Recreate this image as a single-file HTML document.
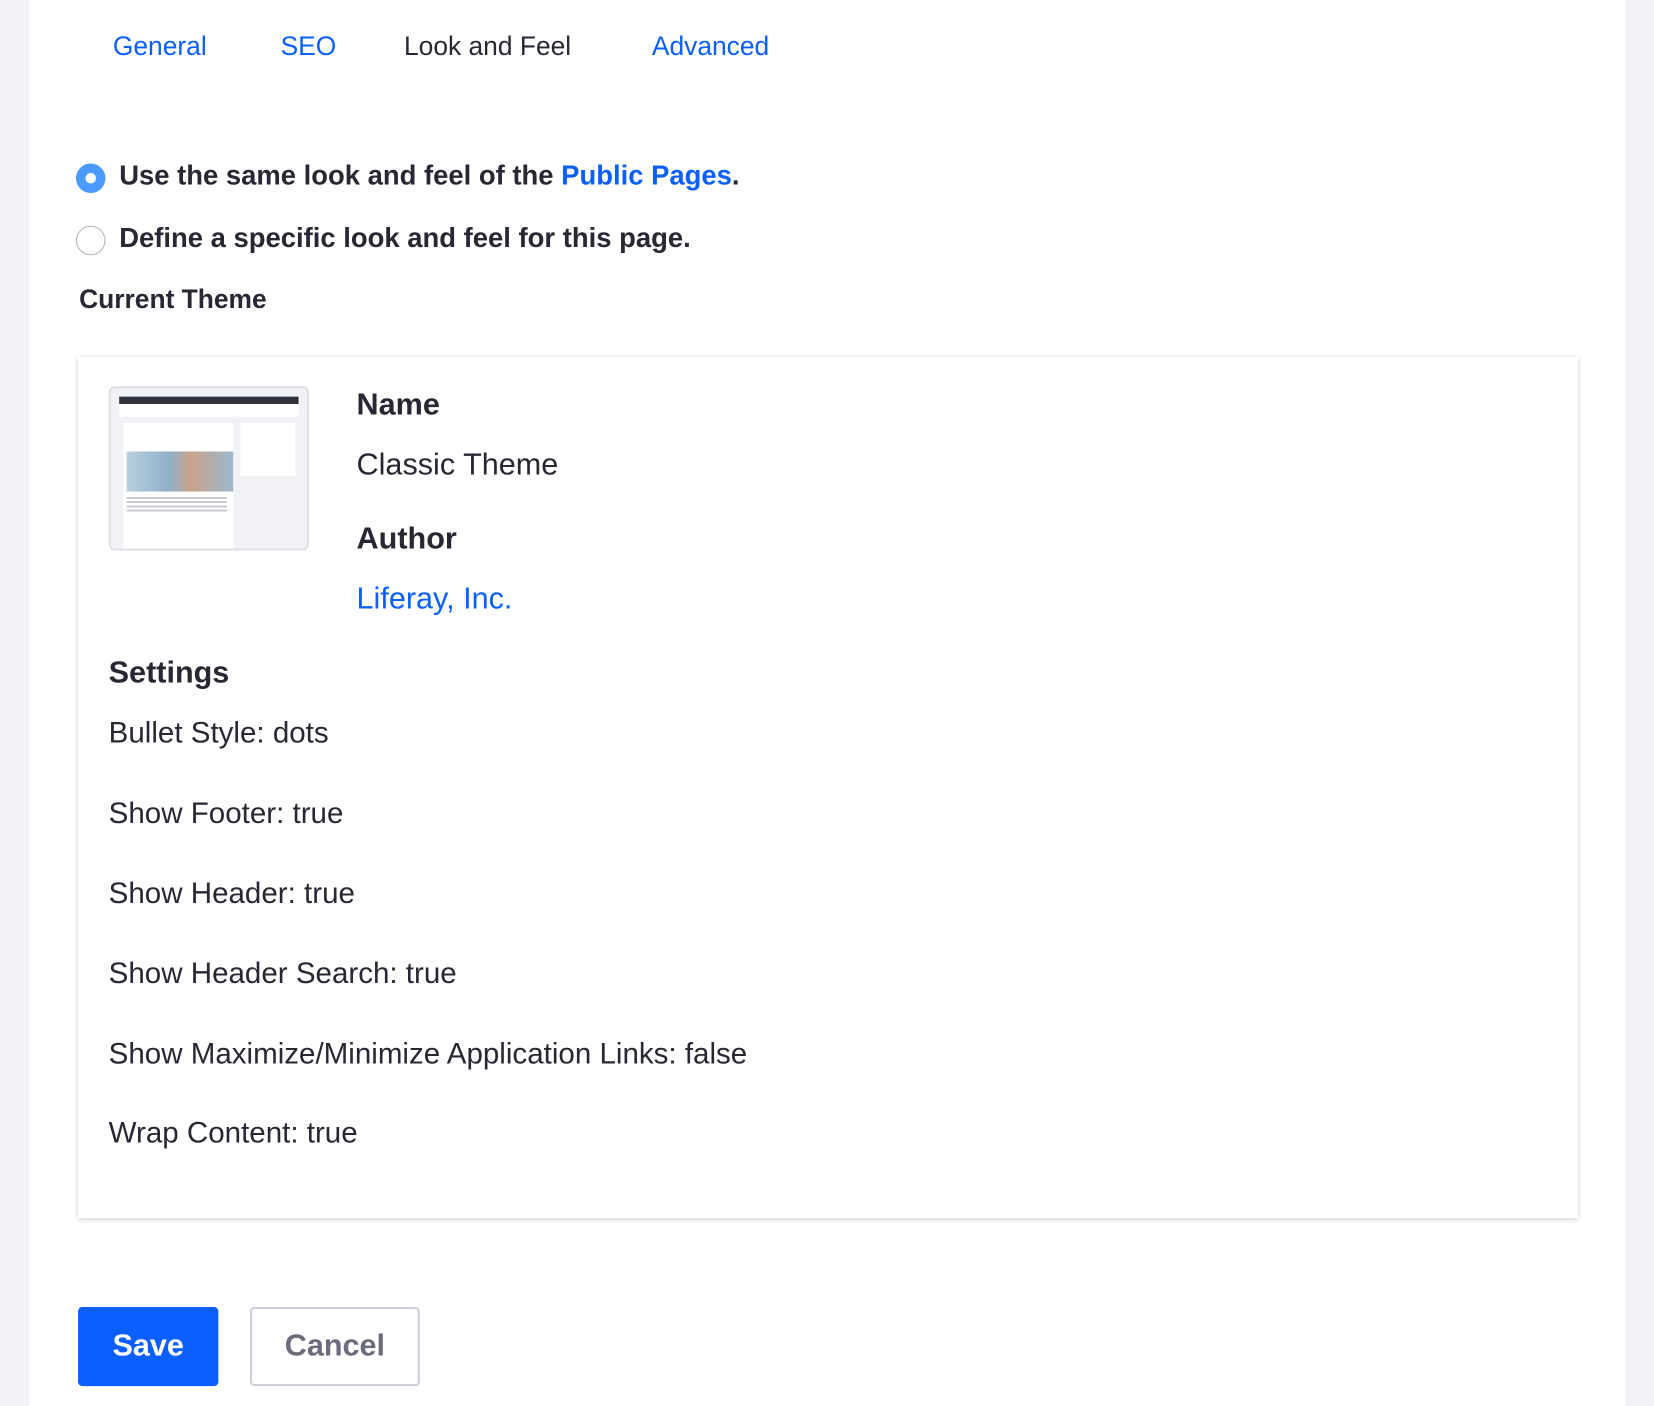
<!DOCTYPE html>
<html><head><meta charset="utf-8"><style>
html,body{margin:0;padding:0;width:1654px;height:1406px;overflow:hidden;background:#f1f2f5;font-family:"Liberation Sans",Arial,sans-serif;color:#272833}
#w{position:absolute;left:0;top:0;width:1568px;height:1333px;transform:scale(1.05485);transform-origin:0 0}
.panel{position:absolute;left:28px;top:0;width:1513px;height:1333px;background:#fff}
.a{position:absolute;white-space:nowrap}
.tab{top:30px;font-size:25px;color:#0b5fff}
.rad{position:absolute;width:28px;height:28px;border-radius:50%;box-sizing:border-box}
.card{position:absolute;left:74px;top:338px;width:1422px;height:817px;background:#fff;box-shadow:0 1px 4px rgba(0,0,0,.22)}
.set{font-size:28px;left:103px}
</style></head><body><div id="w">
<div class="panel"></div>
<div class="a tab" style="left:107px">General</div>
<div class="a tab" style="left:266px">SEO</div>
<div class="a tab" style="left:383px;color:#272833">Look and Feel</div>
<div class="a tab" style="left:618px">Advanced</div>
<div class="rad" style="left:72px;top:155px;background:#4b9bff;"><div style="position:absolute;left:9px;top:9px;width:10px;height:10px;border-radius:50%;background:#fff"></div></div>
<div class="a" style="left:113px;top:151px;font-size:26px;font-weight:bold">Use the same look and feel of the <span style="color:#0b5fff">Public Pages</span>.</div>
<div class="rad" style="left:72px;top:214px;border:1.5px solid #b0b3bb;background:#fff"></div>
<div class="a" style="left:113px;top:210px;font-size:26px;font-weight:bold">Define a specific look and feel for this page.</div>
<div class="a" style="left:75px;top:270px;font-size:25px;font-weight:bold">Current Theme</div>
<div class="card"></div>
<div style="position:absolute;left:103px;top:366px;width:186px;height:152px;border:2px solid #dfe1e6;border-radius:6px;background:#f1f2f5;overflow:hidden">
 <div style="position:absolute;left:8px;top:8px;width:170px;height:7px;background:#30313f"></div>
 <div style="position:absolute;left:8px;top:15px;width:170px;height:12px;background:#fff"></div>
 <div style="position:absolute;left:12px;top:33px;width:104px;height:120px;background:#fff"></div>
 <div style="position:absolute;left:123px;top:33px;width:52px;height:50px;background:#fff"></div>
 <div style="position:absolute;left:15px;top:60px;width:101px;height:38px;background:linear-gradient(90deg,#b9cfe0,#8fb0c9 40%,#c9a48a 60%,#9bb8cf)"></div>
 <div style="position:absolute;left:15px;top:103px;width:95px;height:14px;background:repeating-linear-gradient(#c8cad0 0 2px,#fff 2px 4px)"></div>
</div>
<div class="a" style="left:338px;top:368px;font-size:29px;font-weight:bold">Name</div>
<div class="a" style="left:338px;top:425px;font-size:29px">Classic Theme</div>
<div class="a" style="left:338px;top:495px;font-size:29px;font-weight:bold">Author</div>
<div class="a" style="left:338px;top:552px;font-size:29px;color:#0b5fff">Liferay, Inc.</div>
<div class="a" style="left:103px;top:622px;font-size:29px;font-weight:bold">Settings</div>
<div class="a set" style="top:679px">Bullet Style: dots</div>
<div class="a set" style="top:755px">Show Footer: true</div>
<div class="a set" style="top:831px">Show Header: true</div>
<div class="a set" style="top:907px">Show Header Search: true</div>
<div class="a set" style="top:983px">Show Maximize/Minimize Application Links: false</div>
<div class="a set" style="top:1058px">Wrap Content: true</div>
<div style="position:absolute;left:74px;top:1239px;width:133px;height:75px;background:#0b5fff;border-radius:4px;color:#fff;font-size:29px;font-weight:bold;text-align:center;line-height:75px">Save</div>
<div style="position:absolute;left:237px;top:1239px;width:161px;height:75px;box-sizing:border-box;border:2px solid #cdced9;border-radius:4px;color:#6b6c7e;font-size:29px;font-weight:bold;text-align:center;line-height:71px">Cancel</div>
</div></body></html>
